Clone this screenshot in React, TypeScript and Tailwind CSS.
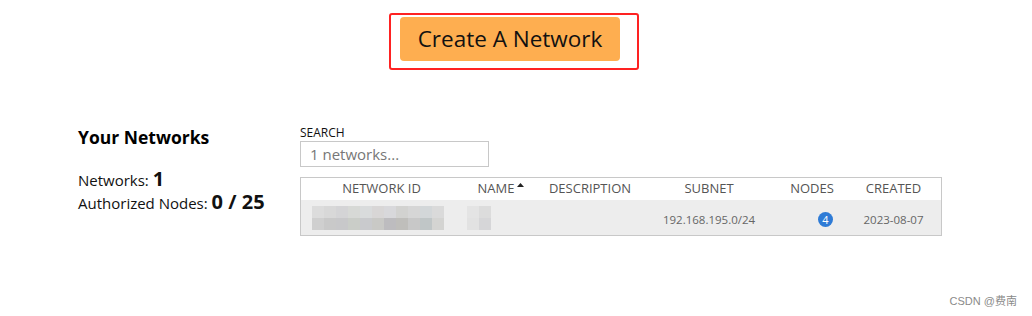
import React from "react";

const F = { fontFamily: '"Open Sans", "Noto Sans", "Noto Sans CJK SC", sans-serif' };

const idRow1 = ["#dcdcdc", "#d8d8d8", "#d4d4d6", "#d7d9d6", "#d9dbdc", "#d8d6d6", "#d8d8db", "#d2d2d0", "#d6d6d6", "#d3d7d9", "#dadada"];
const idRow2 = ["#cfcfcf", "#c9c9c9", "#c8c8ca", "#cacdc8", "#c9cacd", "#c9c9c6", "#bdbcbf", "#bfbebb", "#c8c8c8", "#c0c6c7", "#d4d4d2"];

function Blur({ r1, r2 }: { r1: string[]; r2: string[] }) {
  return (
    <div className="flex flex-col">
      <div className="flex">
        {r1.map((c, i) => (
          <div key={i} className="w-[12px] h-[12px]" style={{ background: c }} />
        ))}
      </div>
      <div className="flex">
        {r2.map((c, i) => (
          <div key={i} className="w-[12px] h-[12px]" style={{ background: c }} />
        ))}
      </div>
    </div>
  );
}

export default function App() {
  return (
    <div className="w-[1032px] h-[316px] bg-white relative text-black" style={F}>
      <div className="flex justify-center pt-[13px]">
        <div className="mr-[4px] border-2 border-[#fe2222] rounded-[3px] pl-[9px] pr-[17px] pt-[2px] pb-[7px]">
          <div className="w-[220px] h-[44px] bg-[#feae50] rounded-[4px] flex items-center justify-center text-[22.5px] text-[#111] pb-[1px]">
            Create A Network
          </div>
        </div>
      </div>

      <div className="flex mt-[54px]">
        <div className="w-[300px] pl-[78px] pt-[1px]">
          <div className="text-[17.5px] font-bold leading-[24px]">Your Networks</div>
          <div className="mt-[19px] text-[15px] leading-[22px] text-[#111]">
            Networks: <span className="font-bold text-[20px]">1</span>
          </div>
          <div className="text-[15px] leading-[22px] text-[#111]">
            Authorized Nodes: <span className="font-bold text-[20px]">0 / 25</span>
          </div>
        </div>

        <div className="w-[642px]">
          <div className="text-[12px] leading-[16px] text-[#111] mt-[1px]">SEARCH</div>
          <div className="w-[189px] h-[26px] border border-[#c8c8c8] flex items-center pl-[9px] text-[15px] text-[#777]">
            1 networks...
          </div>
          <div className="mt-[10px] border border-[#c8c8c8] text-[13px] text-[#555]">
            <div className="flex h-[22px] items-center bg-white">
              <div className="w-[161px] text-center">NETWORK ID</div>
              <div className="w-[78px] text-center flex items-center justify-center gap-[3px]">
                NAME
                <svg width="7" height="4" viewBox="0 0 7 4" className="mb-[8px]">
                  <path d="M0 4 L3.5 0 L7 4 Z" fill="#222" />
                </svg>
              </div>
              <div className="w-[100px] text-center">DESCRIPTION</div>
              <div className="w-[138px] text-center">SUBNET</div>
              <div className="w-[68px] text-center">NODES</div>
              <div className="flex-1 text-center">CREATED</div>
            </div>
            <div className="flex h-[35px] items-center bg-[#ededed] text-[11.5px] text-[#666]">
              <div className="w-[161px] pl-[11px]">
                <Blur r1={idRow1} r2={idRow2} />
              </div>
              <div className="w-[78px] pl-[5px]">
                <Blur r1={["#e4e4e4", "#dcdcdc"]} r2={["#e2e2e2", "#d6d6d8"]} />
              </div>
              <div className="w-[100px]" />
              <div className="w-[138px] text-center pt-[4px]">192.168.195.0/24</div>
              <div className="w-[68px] flex justify-end pr-[13px] pt-[3px]">
                <div className="w-[15px] h-[15px] rounded-full bg-[#2e7bd6] text-white text-[11px] leading-[15px] text-center">4</div>
              </div>
              <div className="flex-1 text-center pt-[4px]">2023-08-07</div>
            </div>
          </div>
        </div>
      </div>

      <div className="absolute right-[15px] bottom-[7px] text-[11px] text-[#8a8a8a]" style={{ fontFamily: '"Liberation Sans", "Noto Sans CJK SC", sans-serif' }}>
        CSDN @费南
      </div>
    </div>
  );
}
